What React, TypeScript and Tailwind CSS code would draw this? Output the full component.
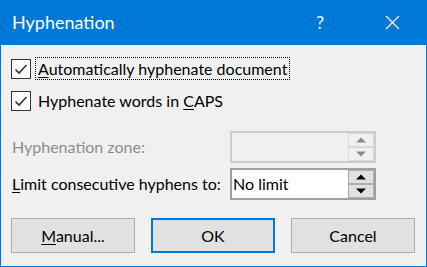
import React from "react";

const font = { fontFamily: 'Lato, "Noto Sans", sans-serif' };

function Check() {
  return (
    <div className="w-[20px] h-[20px] border border-[#333333] bg-white flex items-center justify-center shrink-0">
      <svg width="14" height="12" viewBox="0 0 14 12">
        <path d="M1.5 6.5 L5 10 L12.5 2" fill="none" stroke="#333" strokeWidth="1.6" />
      </svg>
    </div>
  );
}

function Arrow({ up, color }: { up: boolean; color: string }) {
  return (
    <svg width="10" height="6" viewBox="0 0 10 6">
      {up ? <path d="M0 5.5 L5 0.5 L10 5.5 Z" fill={color} /> : <path d="M0 0.5 L5 5.5 L10 0.5 Z" fill={color} />}
    </svg>
  );
}

function Spin({ enabled, value }: { enabled: boolean; value?: string }) {
  const border = enabled ? "border-[#a0a0a0]" : "border-[#cccccc]";
  const bg = enabled ? "bg-white" : "bg-[#f0f0f0]";
  const btnBorder = enabled ? "border-[#adadad]" : "border-[#d9d9d9]";
  const btnBg = enabled ? "bg-[#e1e1e1]" : "bg-[#f0f0f0]";
  const arrow = enabled ? "#000000" : "#8a8a8a";
  return (
    <div className={`w-[146px] h-[32px] border-2 ${border} ${bg} flex`}>
      <div className="flex-1 flex items-center pl-[1px] text-[16px] text-black leading-none whitespace-nowrap">{value}</div>
      <div className="w-[26px] flex flex-col">
        <div className={`flex-1 border ${btnBorder} ${btnBg} flex items-center justify-center`}>
          <Arrow up color={arrow} />
        </div>
        <div className={`flex-1 border ${btnBorder} ${btnBg} flex items-center justify-center`}>
          <Arrow up={false} color={arrow} />
        </div>
      </div>
    </div>
  );
}

function Btn({ children, primary }: { children: React.ReactNode; primary?: boolean }) {
  return (
    <div
      className={`w-[124px] h-[35px] bg-[#e1e1e1] flex items-center justify-center text-[16px] text-black whitespace-nowrap ${
        primary ? "border-2 border-[#0078d7]" : "border border-[#adadad]"
      }`}
    >
      {children}
    </div>
  );
}

export default function App() {
  return (
    <div style={font} className="w-[427px] h-[267px] bg-[#f0f0f0] border border-[#0078d7] border-t-0 flex flex-col overflow-hidden">
      <div className="h-[45px] bg-[#0078d7] flex items-center text-white shrink-0 -mx-[1px]">
        <div className="pl-[12px] text-[18px] flex-1 pb-[1px]">Hyphenation</div>
        <div className="text-[18px] w-[16px] mr-[53px] pb-[1px]">?</div>
        <div className="mr-[27px]">
          <svg width="15" height="15" viewBox="0 0 15 15">
            <path d="M1 1 L14 14 M14 1 L1 14" stroke="white" strokeWidth="1.2" fill="none" />
          </svg>
        </div>
      </div>
      <div className="flex flex-col pl-[10px] pt-[12px] text-[16px] text-black">
        <div className="h-[23px] flex items-center gap-[4px]">
          <Check />
          <div className="h-[23px] flex items-center px-[2px] border border-dotted border-black leading-none whitespace-nowrap">
            <span><u className="underline-offset-2">A</u>utomatically hyphenate document</span>
          </div>
        </div>
        <div className="h-[23px] mt-[9px] flex items-center gap-[7px]">
          <Check />
          <span className="leading-none whitespace-nowrap">Hyphenate words in <u className="underline-offset-2">C</u>APS</span>
        </div>
        <div className="h-[32px] mt-[19px] flex items-center">
          <div className="w-[219px] pl-[1px] text-[#8d8d8d] leading-none whitespace-nowrap">Hyphenation zone:</div>
          <Spin enabled={false} />
        </div>
        <div className="h-[32px] mt-[5px] flex items-center">
          <div className="w-[219px] pl-[1px] leading-none whitespace-nowrap"><u className="underline-offset-2">L</u>imit consecutive hyphens to:</div>
          <Spin enabled value="No limit" />
        </div>
        <div className="h-[35px] mt-[18px] flex gap-[16px]">
          <Btn><span><u className="underline-offset-2">M</u>anual...</span></Btn>
          <Btn primary>OK</Btn>
          <Btn>Cancel</Btn>
        </div>
      </div>
    </div>
  );
}
